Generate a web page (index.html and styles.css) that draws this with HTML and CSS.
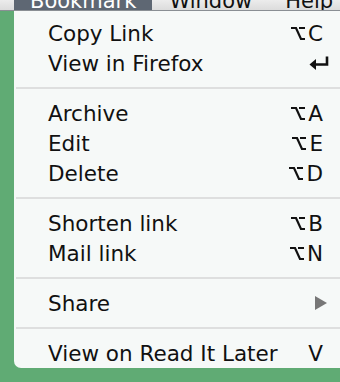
FILE: index.html
```html
<!DOCTYPE html>
<html>
<head>
<meta charset="utf-8">
<title>Bookmark menu</title>
<link rel="stylesheet" href="styles.css">
</head>
<body>
<div class="menubar">
  <span class="bar-item active">Bookmark</span>
  <span class="bar-item">Window</span>
  <span class="bar-item">Help</span>
</div>
<div class="stage">
  <ul class="menu">
    <li class="item"><span>Copy Link</span><span class="key"><svg class="opt" viewBox="0 0 14 15"><path d="M0 2H5L10 13H14M8 2H14"/></svg>C</span></li>
    <li class="item"><span>View in Firefox</span><svg class="ret" viewBox="0 0 20 15"><path d="M18 1.5V9.5H5"/><path class="head" d="M0.5 9.5L7 4V15Z"/></svg></li>
    <li class="sep"></li>
    <li class="item"><span>Archive</span><span class="key"><svg class="opt" viewBox="0 0 14 15"><path d="M0 2H5L10 13H14M8 2H14"/></svg>A</span></li>
    <li class="item"><span>Edit</span><span class="key"><svg class="opt" viewBox="0 0 14 15"><path d="M0 2H5L10 13H14M8 2H14"/></svg>E</span></li>
    <li class="item"><span>Delete</span><span class="key"><svg class="opt" viewBox="0 0 14 15"><path d="M0 2H5L10 13H14M8 2H14"/></svg>D</span></li>
    <li class="sep"></li>
    <li class="item"><span>Shorten link</span><span class="key"><svg class="opt" viewBox="0 0 14 15"><path d="M0 2H5L10 13H14M8 2H14"/></svg>B</span></li>
    <li class="item"><span>Mail link</span><span class="key"><svg class="opt" viewBox="0 0 14 15"><path d="M0 2H5L10 13H14M8 2H14"/></svg>N</span></li>
    <li class="sep"></li>
    <li class="item"><span>Share</span><svg class="arrow" viewBox="0 0 12 14"><path d="M0 0L12 7L0 14Z"/></svg></li>
    <li class="sep"></li>
    <li class="item"><span>View on Read It Later</span><span class="key">V</span></li>
  </ul>
</div>
</body>
</html>
```
FILE: styles.css
```css
*{margin:0;padding:0;box-sizing:border-box;}
body{background:#60ab74;font-family:"DejaVu Sans",Verdana,sans-serif;color:#111;overflow:hidden;height:382px;}
.menubar{height:11px;display:flex;background:linear-gradient(#ececec,#dcdcdc);border-bottom:1px solid #8a8f94;overflow:hidden;padding-left:14px;}
.bar-item{font-size:21px;line-height:20px;margin-top:-9px;padding:0 16px 0 17px;color:#111;}
.bar-item.active{background:#5e6773;color:#fff;width:139px;padding-left:16px;}
.stage{padding-left:14px;}
.menu{list-style:none;background:#f6f9f8;height:357px;padding-top:7px;border-bottom-left-radius:7px;}
.item{height:30px;display:flex;align-items:center;justify-content:space-between;padding:0 17px 0 34px;font-size:21.5px;}
.key{display:flex;align-items:center;}
.opt{width:14px;height:15px;margin-right:3px;fill:none;stroke:#111;stroke-width:2.2;}
.ret{width:20px;height:15px;margin-right:-6px;margin-top:-2px;fill:none;stroke:#111;stroke-width:2.6;}
.ret .head{fill:#111;stroke:none;}
.arrow{width:12px;height:14px;margin-right:-4px;fill:#777;}
.sep{height:20px;padding-top:9px;}
.sep::after{content:"";display:block;height:2px;background:#dedfdf;margin-left:2px;}
```
